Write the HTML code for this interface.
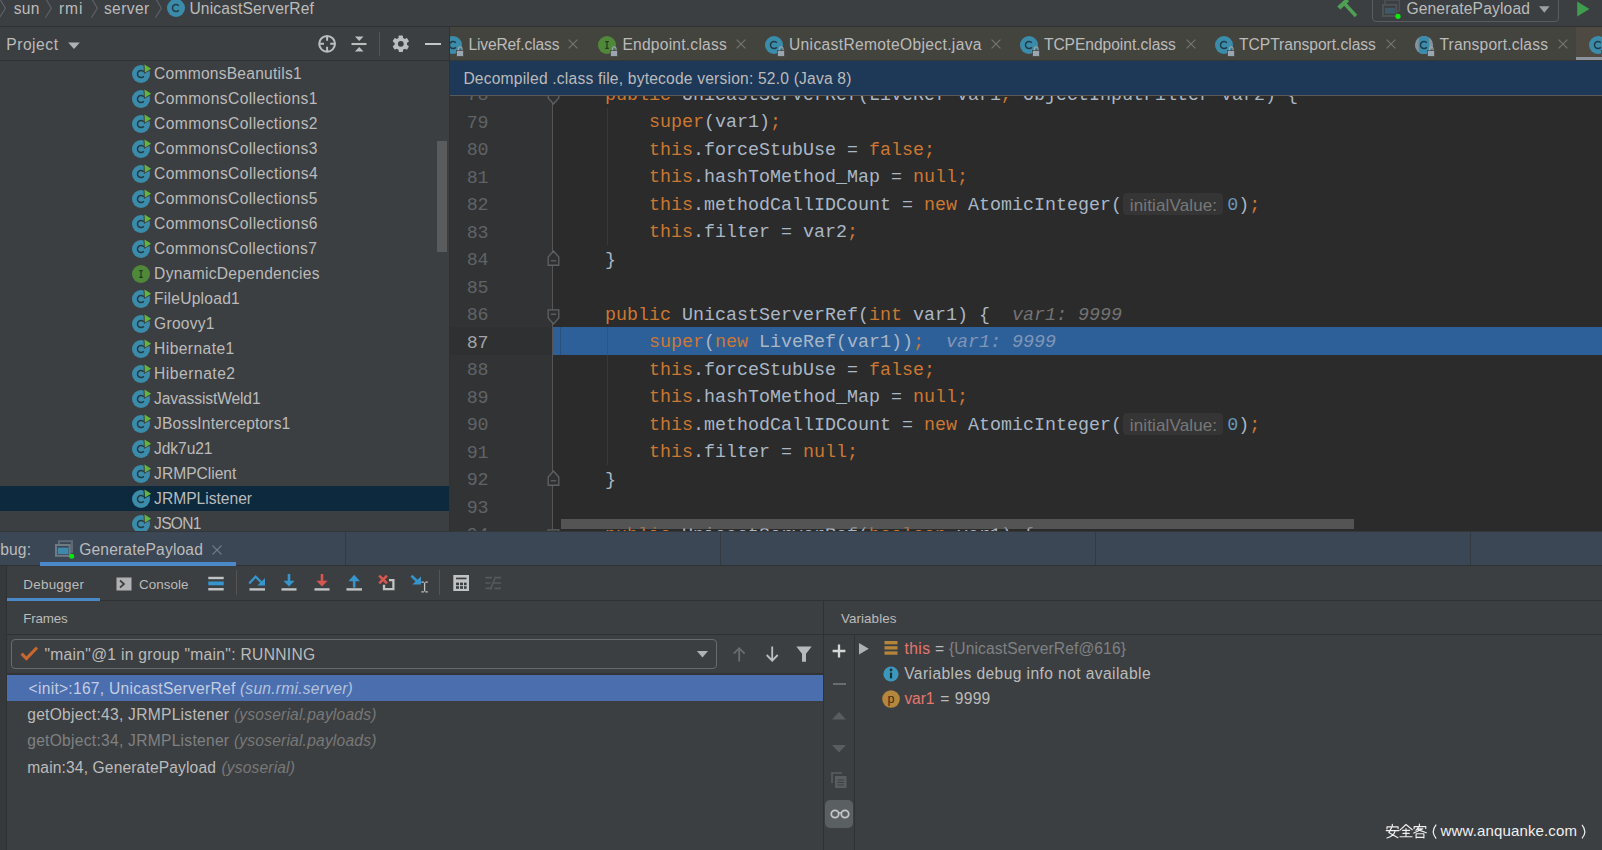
<!DOCTYPE html>
<html><head><meta charset="utf-8"><title>IDE</title>
<style>
html,body{margin:0;padding:0;}
body{width:1602px;height:850px;overflow:hidden;background:#3c3f41;position:relative;font-family:"Liberation Sans",sans-serif;color:#bbbbbb;}
.ab{position:absolute;}
.t{position:absolute;white-space:pre;font-size:16px;line-height:20px;color:#bbbbbb;}
.code{position:absolute;white-space:pre;font-family:"Liberation Mono",monospace;font-size:18.33px;line-height:27.5px;color:#a9b7c6;height:27.5px;}
.k{color:#cc7832;}
.n{color:#6897bb;}
.ln{position:absolute;white-space:pre;font-family:"Liberation Mono",monospace;font-size:18.33px;line-height:27.5px;color:#606366;left:450px;width:38px;text-align:right;height:27.5px;letter-spacing:-0.4px;}
.hint{display:inline-block;vertical-align:top;font-family:"Liberation Sans",sans-serif;font-size:17px;letter-spacing:0.13px;color:#787878;background:#353535;border-radius:4px;height:22px;line-height:25px;margin:1px 3.7px 0 1.5px;width:100px;text-align:center;}
.dv{color:#727272;font-style:italic;}
</style></head><body>

<div class="ab" style="left:0;top:26px;width:1602px;height:1px;background:#2f3133"></div>
<svg class="ab" style="left:-0.8px;top:0" width="10" height="20" viewBox="0 0 10 20"><path d="M0.6 -1.5 L6.4 8.2 L0.3 17.8" fill="none" stroke="#5e6468" stroke-width="1.1"/></svg>
<svg class="ab" style="left:44.6px;top:0" width="10" height="20" viewBox="0 0 10 20"><path d="M0.6 -1.5 L6.4 8.2 L0.3 17.8" fill="none" stroke="#5e6468" stroke-width="1.1"/></svg>
<svg class="ab" style="left:90.8px;top:0" width="10" height="20" viewBox="0 0 10 20"><path d="M0.6 -1.5 L6.4 8.2 L0.3 17.8" fill="none" stroke="#5e6468" stroke-width="1.1"/></svg>
<svg class="ab" style="left:154.8px;top:0" width="10" height="20" viewBox="0 0 10 20"><path d="M0.6 -1.5 L6.4 8.2 L0.3 17.8" fill="none" stroke="#5e6468" stroke-width="1.1"/></svg>
<div class="t" style="left:13.70px;top:-1.06px;font-size:15.6px;letter-spacing:0.249px;">sun</div>
<div class="t" style="left:58.90px;top:-1.06px;font-size:15.6px;letter-spacing:1.015px;">rmi</div>
<div class="t" style="left:103.90px;top:-1.06px;font-size:15.6px;letter-spacing:0.393px;">server</div>
<svg class="ab" style="left:166px;top:-1.6999999999999993px;overflow:visible" width="20" height="20" viewBox="0 0 20 20"><circle cx="10" cy="10" r="9" fill="#3b8cab"/><path d="M12.8 7.8 A3.55 3.55 0 1 0 12.8 12.2" fill="none" stroke="#223a45" stroke-width="1.45"/></svg>
<div class="t" style="left:189.40px;top:-1.06px;font-size:15.6px;letter-spacing:0.154px;">UnicastServerRef</div>
<svg class="ab" style="left:1334px;top:-3px" width="26" height="24" viewBox="0 0 26 24"><path d="M3.2 9.6 L12.2 1.2 L15.2 4.2 L6.4 12.6 Z" fill="#4f9f55"/><path d="M10.5 6.5 L22 19" stroke="#4f9f55" stroke-width="3.4"/></svg>
<div class="ab" style="left:1372px;top:-6px;width:187px;height:28px;border:1px solid #5a5d5f;border-radius:4px;box-sizing:border-box"></div>
<svg class="ab" style="left:1378px;top:-2px" width="26" height="24" viewBox="0 0 26 24"><rect x="7" y="2" width="14.3" height="11" fill="none" stroke="#4d5154" stroke-width="1.6"/><rect x="4.9" y="6.8" width="13.4" height="11.2" fill="#3c3f41" stroke="#4e5356" stroke-width="1.9"/><rect x="6.9" y="9.9" width="10" height="5.9" fill="#3f5a66"/><circle cx="20" cy="18.3" r="2.6" fill="#08ee08"/></svg>
<div class="t" style="left:1406.40px;top:-1.06px;font-size:15.6px;letter-spacing:0.152px;">GeneratePayload</div>
<svg class="ab" style="left:1538px;top:6px" width="12" height="8" viewBox="0 0 12 8"><path d="M1 0.2 H11.6 L6.3 6.8 Z" fill="#9da0a4"/></svg>
<svg class="ab" style="left:1576px;top:0px" width="16" height="18" viewBox="0 0 16 18"><path d="M1.2 1.6 L13.4 9 L1.2 16.4 Z" fill="#3f9e4d"/></svg>
<div class="ab" style="left:0;top:60px;width:450px;height:1px;background:#2f3133"></div>
<div class="ab" style="left:449px;top:27px;width:1px;height:504px;background:#2f3133"></div>
<div class="t" style="left:6.20px;top:34.94px;font-size:15.6px;letter-spacing:0.550px;">Project</div>
<svg class="ab" style="left:67px;top:41.5px" width="14" height="8" viewBox="0 0 14 8"><path d="M1.2 0.5 H12.8 L7 7 Z" fill="#afb1b3"/></svg>
<svg class="ab" style="left:317px;top:34px" width="20" height="20" viewBox="0 0 20 20"><circle cx="10.1" cy="9.8" r="7.9" fill="none" stroke="#bbbdbf" stroke-width="2"/><path d="M10.1 2v4.8M10.1 12.8v4.8M2.2 9.8h4.8M13.2 9.8h4.8" stroke="#bbbdbf" stroke-width="2"/></svg>
<svg class="ab" style="left:349px;top:34px" width="20" height="20" viewBox="0 0 20 20"><path d="M2.5 10h15" stroke="#bbbdbf" stroke-width="2.1"/><path d="M5.9 2.4h8.6L10.2 7Z M5.9 17.6h8.6L10.2 13Z" fill="#bbbdbf"/></svg>
<div class="ab" style="left:379px;top:32px;width:1px;height:24px;background:#555453"></div>
<svg class="ab" style="left:391px;top:34px" width="20" height="20" viewBox="0 0 20 20"><g fill="#bbbdbf" transform="translate(-0.2,-0.2)"><circle cx="10" cy="10" r="6.3"/><rect x="7.8" y="1.7" width="4.4" height="16.6" rx="0.8"/><rect x="7.8" y="1.7" width="4.4" height="16.6" rx="0.8" transform="rotate(60 10 10)"/><rect x="7.8" y="1.7" width="4.4" height="16.6" rx="0.8" transform="rotate(120 10 10)"/></g><circle cx="9.8" cy="9.8" r="2.9" fill="#3c3f41"/></svg>
<div class="ab" style="left:425.4px;top:42.8px;width:15.4px;height:2.3px;background:#c4c6c8"></div>
<div class="ab" style="left:0;top:61px;width:449px;height:470px;overflow:hidden"><div class="ab" style="left:0;top:-61px;width:449px;height:600px">
<svg class="ab" style="left:131px;top:63.8px;overflow:visible" width="20" height="20" viewBox="0 0 20 20"><circle cx="10" cy="10" r="9" fill="#3b8cab"/><path d="M12.8 7.8 A3.55 3.55 0 1 0 12.8 12.2" fill="none" stroke="#223a45" stroke-width="1.45"/><path d="M12.5 -1.2 L21.8 4.7 L12.9 10 Z" fill="#3c3f41"/><path d="M13.5 0.4 L20.2 4.7 L13.9 8.5 Z" fill="#62b543"/></svg>
<div class="t" style="left:154.10px;top:63.94px;font-size:15.6px;letter-spacing:0.227px;">CommonsBeanutils1</div>
<svg class="ab" style="left:131px;top:88.8px;overflow:visible" width="20" height="20" viewBox="0 0 20 20"><circle cx="10" cy="10" r="9" fill="#3b8cab"/><path d="M12.8 7.8 A3.55 3.55 0 1 0 12.8 12.2" fill="none" stroke="#223a45" stroke-width="1.45"/><path d="M12.5 -1.2 L21.8 4.7 L12.9 10 Z" fill="#3c3f41"/><path d="M13.5 0.4 L20.2 4.7 L13.9 8.5 Z" fill="#62b543"/></svg>
<div class="t" style="left:154.10px;top:88.94px;font-size:15.6px;letter-spacing:0.402px;">CommonsCollections1</div>
<svg class="ab" style="left:131px;top:113.8px;overflow:visible" width="20" height="20" viewBox="0 0 20 20"><circle cx="10" cy="10" r="9" fill="#3b8cab"/><path d="M12.8 7.8 A3.55 3.55 0 1 0 12.8 12.2" fill="none" stroke="#223a45" stroke-width="1.45"/><path d="M12.5 -1.2 L21.8 4.7 L12.9 10 Z" fill="#3c3f41"/><path d="M13.5 0.4 L20.2 4.7 L13.9 8.5 Z" fill="#62b543"/></svg>
<div class="t" style="left:154.10px;top:113.94px;font-size:15.6px;letter-spacing:0.413px;">CommonsCollections2</div>
<svg class="ab" style="left:131px;top:138.8px;overflow:visible" width="20" height="20" viewBox="0 0 20 20"><circle cx="10" cy="10" r="9" fill="#3b8cab"/><path d="M12.8 7.8 A3.55 3.55 0 1 0 12.8 12.2" fill="none" stroke="#223a45" stroke-width="1.45"/><path d="M12.5 -1.2 L21.8 4.7 L12.9 10 Z" fill="#3c3f41"/><path d="M13.5 0.4 L20.2 4.7 L13.9 8.5 Z" fill="#62b543"/></svg>
<div class="t" style="left:154.10px;top:138.94px;font-size:15.6px;letter-spacing:0.402px;">CommonsCollections3</div>
<svg class="ab" style="left:131px;top:163.8px;overflow:visible" width="20" height="20" viewBox="0 0 20 20"><circle cx="10" cy="10" r="9" fill="#3b8cab"/><path d="M12.8 7.8 A3.55 3.55 0 1 0 12.8 12.2" fill="none" stroke="#223a45" stroke-width="1.45"/><path d="M12.5 -1.2 L21.8 4.7 L12.9 10 Z" fill="#3c3f41"/><path d="M13.5 0.4 L20.2 4.7 L13.9 8.5 Z" fill="#62b543"/></svg>
<div class="t" style="left:154.10px;top:163.94px;font-size:15.6px;letter-spacing:0.423px;">CommonsCollections4</div>
<svg class="ab" style="left:131px;top:188.8px;overflow:visible" width="20" height="20" viewBox="0 0 20 20"><circle cx="10" cy="10" r="9" fill="#3b8cab"/><path d="M12.8 7.8 A3.55 3.55 0 1 0 12.8 12.2" fill="none" stroke="#223a45" stroke-width="1.45"/><path d="M12.5 -1.2 L21.8 4.7 L12.9 10 Z" fill="#3c3f41"/><path d="M13.5 0.4 L20.2 4.7 L13.9 8.5 Z" fill="#62b543"/></svg>
<div class="t" style="left:154.10px;top:188.94px;font-size:15.6px;letter-spacing:0.402px;">CommonsCollections5</div>
<svg class="ab" style="left:131px;top:213.8px;overflow:visible" width="20" height="20" viewBox="0 0 20 20"><circle cx="10" cy="10" r="9" fill="#3b8cab"/><path d="M12.8 7.8 A3.55 3.55 0 1 0 12.8 12.2" fill="none" stroke="#223a45" stroke-width="1.45"/><path d="M12.5 -1.2 L21.8 4.7 L12.9 10 Z" fill="#3c3f41"/><path d="M13.5 0.4 L20.2 4.7 L13.9 8.5 Z" fill="#62b543"/></svg>
<div class="t" style="left:154.10px;top:213.94px;font-size:15.6px;letter-spacing:0.413px;">CommonsCollections6</div>
<svg class="ab" style="left:131px;top:238.8px;overflow:visible" width="20" height="20" viewBox="0 0 20 20"><circle cx="10" cy="10" r="9" fill="#3b8cab"/><path d="M12.8 7.8 A3.55 3.55 0 1 0 12.8 12.2" fill="none" stroke="#223a45" stroke-width="1.45"/><path d="M12.5 -1.2 L21.8 4.7 L12.9 10 Z" fill="#3c3f41"/><path d="M13.5 0.4 L20.2 4.7 L13.9 8.5 Z" fill="#62b543"/></svg>
<div class="t" style="left:154.10px;top:238.94px;font-size:15.6px;letter-spacing:0.381px;">CommonsCollections7</div>
<svg class="ab" style="left:131px;top:263.8px;overflow:visible" width="20" height="20" viewBox="0 0 20 20"><circle cx="10" cy="10" r="9" fill="#50883a"/><path d="M8.2 6.7h3.6M8.2 13.3h3.6M10 6.7v6.6" fill="none" stroke="#1f3a1c" stroke-width="1.2"/></svg>
<div class="t" style="left:154.10px;top:263.94px;font-size:15.6px;letter-spacing:0.288px;">DynamicDependencies</div>
<svg class="ab" style="left:131px;top:288.8px;overflow:visible" width="20" height="20" viewBox="0 0 20 20"><circle cx="10" cy="10" r="9" fill="#3b8cab"/><path d="M12.8 7.8 A3.55 3.55 0 1 0 12.8 12.2" fill="none" stroke="#223a45" stroke-width="1.45"/><path d="M12.5 -1.2 L21.8 4.7 L12.9 10 Z" fill="#3c3f41"/><path d="M13.5 0.4 L20.2 4.7 L13.9 8.5 Z" fill="#62b543"/></svg>
<div class="t" style="left:154.10px;top:288.94px;font-size:15.6px;letter-spacing:0.241px;">FileUpload1</div>
<svg class="ab" style="left:131px;top:313.8px;overflow:visible" width="20" height="20" viewBox="0 0 20 20"><circle cx="10" cy="10" r="9" fill="#3b8cab"/><path d="M12.8 7.8 A3.55 3.55 0 1 0 12.8 12.2" fill="none" stroke="#223a45" stroke-width="1.45"/><path d="M12.5 -1.2 L21.8 4.7 L12.9 10 Z" fill="#3c3f41"/><path d="M13.5 0.4 L20.2 4.7 L13.9 8.5 Z" fill="#62b543"/></svg>
<div class="t" style="left:154.10px;top:313.94px;font-size:15.6px;letter-spacing:0.235px;">Groovy1</div>
<svg class="ab" style="left:131px;top:338.8px;overflow:visible" width="20" height="20" viewBox="0 0 20 20"><circle cx="10" cy="10" r="9" fill="#3b8cab"/><path d="M12.8 7.8 A3.55 3.55 0 1 0 12.8 12.2" fill="none" stroke="#223a45" stroke-width="1.45"/><path d="M12.5 -1.2 L21.8 4.7 L12.9 10 Z" fill="#3c3f41"/><path d="M13.5 0.4 L20.2 4.7 L13.9 8.5 Z" fill="#62b543"/></svg>
<div class="t" style="left:154.10px;top:338.94px;font-size:15.6px;letter-spacing:0.418px;">Hibernate1</div>
<svg class="ab" style="left:131px;top:363.8px;overflow:visible" width="20" height="20" viewBox="0 0 20 20"><circle cx="10" cy="10" r="9" fill="#3b8cab"/><path d="M12.8 7.8 A3.55 3.55 0 1 0 12.8 12.2" fill="none" stroke="#223a45" stroke-width="1.45"/><path d="M12.5 -1.2 L21.8 4.7 L12.9 10 Z" fill="#3c3f41"/><path d="M13.5 0.4 L20.2 4.7 L13.9 8.5 Z" fill="#62b543"/></svg>
<div class="t" style="left:154.10px;top:363.94px;font-size:15.6px;letter-spacing:0.518px;">Hibernate2</div>
<svg class="ab" style="left:131px;top:388.8px;overflow:visible" width="20" height="20" viewBox="0 0 20 20"><circle cx="10" cy="10" r="9" fill="#3b8cab"/><path d="M12.8 7.8 A3.55 3.55 0 1 0 12.8 12.2" fill="none" stroke="#223a45" stroke-width="1.45"/><path d="M12.5 -1.2 L21.8 4.7 L12.9 10 Z" fill="#3c3f41"/><path d="M13.5 0.4 L20.2 4.7 L13.9 8.5 Z" fill="#62b543"/></svg>
<div class="t" style="left:154.10px;top:388.94px;font-size:15.6px;letter-spacing:-0.121px;">JavassistWeld1</div>
<svg class="ab" style="left:131px;top:413.8px;overflow:visible" width="20" height="20" viewBox="0 0 20 20"><circle cx="10" cy="10" r="9" fill="#3b8cab"/><path d="M12.8 7.8 A3.55 3.55 0 1 0 12.8 12.2" fill="none" stroke="#223a45" stroke-width="1.45"/><path d="M12.5 -1.2 L21.8 4.7 L12.9 10 Z" fill="#3c3f41"/><path d="M13.5 0.4 L20.2 4.7 L13.9 8.5 Z" fill="#62b543"/></svg>
<div class="t" style="left:154.10px;top:413.94px;font-size:15.6px;letter-spacing:0.159px;">JBossInterceptors1</div>
<svg class="ab" style="left:131px;top:438.8px;overflow:visible" width="20" height="20" viewBox="0 0 20 20"><circle cx="10" cy="10" r="9" fill="#3b8cab"/><path d="M12.8 7.8 A3.55 3.55 0 1 0 12.8 12.2" fill="none" stroke="#223a45" stroke-width="1.45"/><path d="M12.5 -1.2 L21.8 4.7 L12.9 10 Z" fill="#3c3f41"/><path d="M13.5 0.4 L20.2 4.7 L13.9 8.5 Z" fill="#62b543"/></svg>
<div class="t" style="left:154.10px;top:438.94px;font-size:15.6px;letter-spacing:-0.097px;">Jdk7u21</div>
<svg class="ab" style="left:131px;top:463.8px;overflow:visible" width="20" height="20" viewBox="0 0 20 20"><circle cx="10" cy="10" r="9" fill="#3b8cab"/><path d="M12.8 7.8 A3.55 3.55 0 1 0 12.8 12.2" fill="none" stroke="#223a45" stroke-width="1.45"/><path d="M12.5 -1.2 L21.8 4.7 L12.9 10 Z" fill="#3c3f41"/><path d="M13.5 0.4 L20.2 4.7 L13.9 8.5 Z" fill="#62b543"/></svg>
<div class="t" style="left:154.10px;top:463.94px;font-size:15.6px;letter-spacing:-0.005px;">JRMPClient</div>
<div class="ab" style="left:0;top:486px;width:450px;height:25px;background:#0d293e"></div>
<svg class="ab" style="left:131px;top:488.8px;overflow:visible" width="20" height="20" viewBox="0 0 20 20"><circle cx="10" cy="10" r="9" fill="#3b8cab"/><path d="M12.8 7.8 A3.55 3.55 0 1 0 12.8 12.2" fill="none" stroke="#223a45" stroke-width="1.45"/><path d="M12.5 -1.2 L21.8 4.7 L12.9 10 Z" fill="#0d293e"/><path d="M13.5 0.4 L20.2 4.7 L13.9 8.5 Z" fill="#62b543"/></svg>
<div class="t" style="left:154.10px;top:488.94px;font-size:15.6px;letter-spacing:0.003px;">JRMPListener</div>
<svg class="ab" style="left:131px;top:513.8px;overflow:visible" width="20" height="20" viewBox="0 0 20 20"><circle cx="10" cy="10" r="9" fill="#3b8cab"/><path d="M12.8 7.8 A3.55 3.55 0 1 0 12.8 12.2" fill="none" stroke="#223a45" stroke-width="1.45"/><path d="M12.5 -1.2 L21.8 4.7 L12.9 10 Z" fill="#3c3f41"/><path d="M13.5 0.4 L20.2 4.7 L13.9 8.5 Z" fill="#62b543"/></svg>
<div class="t" style="left:154.10px;top:513.94px;font-size:15.6px;letter-spacing:-0.756px;">JSON1</div>
<div class="ab" style="left:437px;top:141px;width:10.3px;height:111px;background:#595b5d"></div>
</div></div>
<div class="ab" style="left:450px;top:27px;width:1152px;height:33px;background:#44443f"></div>
<div class="ab" style="left:1576px;top:27px;width:26px;height:33px;background:#4e4a42"></div>
<div class="ab" style="left:450px;top:27px;width:1152px;height:33px;overflow:hidden"><div class="ab" style="left:-450px;top:-27px;width:1602px;height:100px">
<svg class="ab" style="left:443px;top:35px;overflow:visible" width="20" height="20" viewBox="0 0 20 20"><circle cx="10" cy="10" r="9" fill="#3b8cab"/><path d="M12.8 7.8 A3.55 3.55 0 1 0 12.8 12.2" fill="none" stroke="#223a45" stroke-width="1.45"/><path d="M15.4 16v-2.3a1.8 1.8 0 0 1 3.6 0v2.3" fill="none" stroke="#9aa7b0" stroke-width="1.2"/><rect x="13.6" y="15.6" width="7" height="5.8" fill="#9aa7b0" stroke="#45443f" stroke-width="0.7"/></svg>
<div class="t" style="left:468.40px;top:34.94px;font-size:15.6px;letter-spacing:-0.136px;">LiveRef.class</div>
<svg class="ab" style="left:568px;top:38.8px" width="10" height="10" viewBox="0 0 10 10"><path d="M0.6 0.6L9.4 9.4M9.4 0.6L0.6 9.4" stroke="#77766f" stroke-width="1.1"/></svg>
<svg class="ab" style="left:597px;top:35px;overflow:visible" width="20" height="20" viewBox="0 0 20 20"><circle cx="10" cy="10" r="9" fill="#50883a"/><path d="M8.2 6.7h3.6M8.2 13.3h3.6M10 6.7v6.6" fill="none" stroke="#1f3a1c" stroke-width="1.2"/><path d="M15.4 16v-2.3a1.8 1.8 0 0 1 3.6 0v2.3" fill="none" stroke="#9aa7b0" stroke-width="1.2"/><rect x="13.6" y="15.6" width="7" height="5.8" fill="#9aa7b0" stroke="#45443f" stroke-width="0.7"/></svg>
<div class="t" style="left:622.40px;top:34.94px;font-size:15.6px;letter-spacing:0.231px;">Endpoint.class</div>
<svg class="ab" style="left:736px;top:38.8px" width="10" height="10" viewBox="0 0 10 10"><path d="M0.6 0.6L9.4 9.4M9.4 0.6L0.6 9.4" stroke="#77766f" stroke-width="1.1"/></svg>
<svg class="ab" style="left:764.3px;top:35px;overflow:visible" width="20" height="20" viewBox="0 0 20 20"><circle cx="10" cy="10" r="9" fill="#3b8cab"/><path d="M12.8 7.8 A3.55 3.55 0 1 0 12.8 12.2" fill="none" stroke="#223a45" stroke-width="1.45"/><path d="M15.4 16v-2.3a1.8 1.8 0 0 1 3.6 0v2.3" fill="none" stroke="#9aa7b0" stroke-width="1.2"/><rect x="13.6" y="15.6" width="7" height="5.8" fill="#9aa7b0" stroke="#45443f" stroke-width="0.7"/></svg>
<div class="t" style="left:789.00px;top:34.94px;font-size:15.6px;letter-spacing:0.343px;">UnicastRemoteObject.java</div>
<svg class="ab" style="left:991.3px;top:38.8px" width="10" height="10" viewBox="0 0 10 10"><path d="M0.6 0.6L9.4 9.4M9.4 0.6L0.6 9.4" stroke="#77766f" stroke-width="1.1"/></svg>
<svg class="ab" style="left:1019.3px;top:35px;overflow:visible" width="20" height="20" viewBox="0 0 20 20"><circle cx="10" cy="10" r="9" fill="#3b8cab"/><path d="M12.8 7.8 A3.55 3.55 0 1 0 12.8 12.2" fill="none" stroke="#223a45" stroke-width="1.45"/><path d="M15.4 16v-2.3a1.8 1.8 0 0 1 3.6 0v2.3" fill="none" stroke="#9aa7b0" stroke-width="1.2"/><rect x="13.6" y="15.6" width="7" height="5.8" fill="#9aa7b0" stroke="#45443f" stroke-width="0.7"/></svg>
<div class="t" style="left:1043.90px;top:34.94px;font-size:15.6px;letter-spacing:-0.039px;">TCPEndpoint.class</div>
<svg class="ab" style="left:1186px;top:38.8px" width="10" height="10" viewBox="0 0 10 10"><path d="M0.6 0.6L9.4 9.4M9.4 0.6L0.6 9.4" stroke="#77766f" stroke-width="1.1"/></svg>
<svg class="ab" style="left:1214.3px;top:35px;overflow:visible" width="20" height="20" viewBox="0 0 20 20"><circle cx="10" cy="10" r="9" fill="#3b8cab"/><path d="M12.8 7.8 A3.55 3.55 0 1 0 12.8 12.2" fill="none" stroke="#223a45" stroke-width="1.45"/><path d="M15.4 16v-2.3a1.8 1.8 0 0 1 3.6 0v2.3" fill="none" stroke="#9aa7b0" stroke-width="1.2"/><rect x="13.6" y="15.6" width="7" height="5.8" fill="#9aa7b0" stroke="#45443f" stroke-width="0.7"/></svg>
<div class="t" style="left:1239.00px;top:34.94px;font-size:15.6px;letter-spacing:-0.020px;">TCPTransport.class</div>
<svg class="ab" style="left:1386.4px;top:38.8px" width="10" height="10" viewBox="0 0 10 10"><path d="M0.6 0.6L9.4 9.4M9.4 0.6L0.6 9.4" stroke="#77766f" stroke-width="1.1"/></svg>
<svg class="ab" style="left:1414px;top:35px;overflow:visible" width="20" height="20" viewBox="0 0 20 20"><clipPath id="cpa"><circle cx="10" cy="10" r="9.1"/></clipPath><circle cx="10" cy="10" r="9.1" fill="#87939b"/><rect x="4.7" y="0" width="10.5" height="20" fill="#3b8cab" clip-path="url(#cpa)"/><path d="M12.8 7.8 A3.55 3.55 0 1 0 12.8 12.2" fill="none" stroke="#223a45" stroke-width="1.45"/><path d="M15.4 16v-2.3a1.8 1.8 0 0 1 3.6 0v2.3" fill="none" stroke="#9aa7b0" stroke-width="1.2"/><rect x="13.6" y="15.6" width="7" height="5.8" fill="#9aa7b0" stroke="#45443f" stroke-width="0.7"/></svg>
<div class="t" style="left:1439.40px;top:34.94px;font-size:15.6px;letter-spacing:0.183px;">Transport.class</div>
<svg class="ab" style="left:1558px;top:38.8px" width="10" height="10" viewBox="0 0 10 10"><path d="M0.6 0.6L9.4 9.4M9.4 0.6L0.6 9.4" stroke="#77766f" stroke-width="1.1"/></svg>
<svg class="ab" style="left:1587.7px;top:35px;overflow:visible" width="20" height="20" viewBox="0 0 20 20"><circle cx="10" cy="10" r="9" fill="#3b8cab"/><path d="M12.8 7.8 A3.55 3.55 0 1 0 12.8 12.2" fill="none" stroke="#223a45" stroke-width="1.45"/><path d="M15.4 16v-2.3a1.8 1.8 0 0 1 3.6 0v2.3" fill="none" stroke="#9aa7b0" stroke-width="1.2"/><rect x="13.6" y="15.6" width="7" height="5.8" fill="#9aa7b0" stroke="#45443f" stroke-width="0.7"/></svg>
<div class="ab" style="left:1576px;top:57px;width:26px;height:3.4px;background:#8b939d"></div>
</div></div>
<div class="ab" style="left:450px;top:60px;width:1152px;height:1px;background:#33373a"></div>
<div class="ab" style="left:450px;top:61px;width:1152px;height:34px;background:#1e3857"></div>
<div class="ab" style="left:450px;top:95px;width:1152px;height:1px;background:#595957"></div>
<div class="t" style="left:463.40px;top:68.94px;font-size:15.6px;letter-spacing:0.204px;">Decompiled .class file, bytecode version: 52.0 (Java 8)</div>
<div class="ab" style="left:450px;top:96px;width:1152px;height:435px;background:#2b2b2b;overflow:hidden"><div class="ab" style="left:-450px;top:-96px;width:1602px;height:600px">
<div class="ab" style="left:450px;top:96px;width:102px;height:435px;background:#313335"></div>
<div class="ab" style="left:450px;top:327px;width:102px;height:28px;background:#2f3032"></div>
<div class="ab" style="left:552px;top:96px;width:1px;height:435px;background:#555555"></div>
<div class="ab" style="left:607px;top:108px;width:1px;height:137px;background:#393939"></div>
<div class="ab" style="left:607px;top:328px;width:1px;height:137px;background:#393939"></div>
<div class="ab" style="left:553px;top:327px;width:1049px;height:28px;background:#2d6099"></div>
<div class="ab" style="left:560px;top:327px;width:1px;height:28px;background:#29507f"></div>
<div class="ab" style="left:607px;top:327px;width:1px;height:28px;background:#2a5486"></div>
<div class="ln" style="top:82.30px;color:#606366">78</div>
<div class="code" style="left:561px;top:81.80px">    <span class="k">public</span> UnicastServerRef(LiveRef var1<span class="k">,</span> ObjectInputFilter var2) {</div>
<div class="ln" style="top:109.80px;color:#606366">79</div>
<div class="code" style="left:561px;top:109.30px">        <span class="k">super</span>(var1)<span class="k">;</span></div>
<div class="ln" style="top:137.30px;color:#606366">80</div>
<div class="code" style="left:561px;top:136.80px">        <span class="k">this</span>.forceStubUse = <span class="k">false;</span></div>
<div class="ln" style="top:164.80px;color:#606366">81</div>
<div class="code" style="left:561px;top:164.30px">        <span class="k">this</span>.hashToMethod_Map = <span class="k">null;</span></div>
<div class="ln" style="top:192.30px;color:#606366">82</div>
<div class="code" style="left:561px;top:191.80px">        <span class="k">this</span>.methodCallIDCount = <span class="k">new</span> AtomicInteger(<span class="hint">initialValue:</span><span class="n">0</span>)<span class="k">;</span></div>
<div class="ln" style="top:219.80px;color:#606366">83</div>
<div class="code" style="left:561px;top:219.30px">        <span class="k">this</span>.filter = var2<span class="k">;</span></div>
<div class="ln" style="top:247.30px;color:#606366">84</div>
<div class="code" style="left:561px;top:246.80px">    }</div>
<div class="ln" style="top:274.80px;color:#606366">85</div>
<div class="ln" style="top:302.30px;color:#606366">86</div>
<div class="code" style="left:561px;top:301.80px">    <span class="k">public</span> UnicastServerRef(<span class="k">int</span> var1) {  <span class="dv">var1: 9999</span></div>
<div class="ln" style="top:329.80px;color:#a4a3a3">87</div>
<div class="code" style="left:561px;top:329.30px">        <span class="k">super</span>(<span class="k">new</span> LiveRef(var1))<span class="k">;</span>  <span class="dv" style="color:#7f96b8">var1: 9999</span></div>
<div class="ln" style="top:357.30px;color:#606366">88</div>
<div class="code" style="left:561px;top:356.80px">        <span class="k">this</span>.forceStubUse = <span class="k">false;</span></div>
<div class="ln" style="top:384.80px;color:#606366">89</div>
<div class="code" style="left:561px;top:384.30px">        <span class="k">this</span>.hashToMethod_Map = <span class="k">null;</span></div>
<div class="ln" style="top:412.30px;color:#606366">90</div>
<div class="code" style="left:561px;top:411.80px">        <span class="k">this</span>.methodCallIDCount = <span class="k">new</span> AtomicInteger(<span class="hint">initialValue:</span><span class="n">0</span>)<span class="k">;</span></div>
<div class="ln" style="top:439.80px;color:#606366">91</div>
<div class="code" style="left:561px;top:439.30px">        <span class="k">this</span>.filter = <span class="k">null;</span></div>
<div class="ln" style="top:467.30px;color:#606366">92</div>
<div class="code" style="left:561px;top:466.80px">    }</div>
<div class="ln" style="top:494.80px;color:#606366">93</div>
<div class="ln" style="top:522.30px;color:#606366">94</div>
<div class="code" style="left:561px;top:521.80px">    <span class="k">public</span> UnicastServerRef(<span class="k">boolean</span> var1) {</div>
<svg class="ab" style="left:546.5px;top:89px" width="13" height="16" viewBox="0 0 13 16"><path d="M1.2 0.8h10.6v8.2l-5.3 6l-5.3-6z" fill="#2f3032" stroke="#5e6163" stroke-width="1.35"/><path d="M3.8 5.2h5.4" stroke="#5e6163" stroke-width="1.35"/></svg>
<svg class="ab" style="left:546.5px;top:250px" width="13" height="16" viewBox="0 0 13 16"><path d="M1.2 15.2h10.6v-8.2l-5.3-6l-5.3 6z" fill="#2f3032" stroke="#5e6163" stroke-width="1.35"/><path d="M3.8 10.8h5.4" stroke="#5e6163" stroke-width="1.35"/></svg>
<svg class="ab" style="left:546.5px;top:309px" width="13" height="16" viewBox="0 0 13 16"><path d="M1.2 0.8h10.6v8.2l-5.3 6l-5.3-6z" fill="#2f3032" stroke="#5e6163" stroke-width="1.35"/><path d="M3.8 5.2h5.4" stroke="#5e6163" stroke-width="1.35"/></svg>
<svg class="ab" style="left:546.5px;top:470px" width="13" height="16" viewBox="0 0 13 16"><path d="M1.2 15.2h10.6v-8.2l-5.3-6l-5.3 6z" fill="#2f3032" stroke="#5e6163" stroke-width="1.35"/><path d="M3.8 10.8h5.4" stroke="#5e6163" stroke-width="1.35"/></svg>
<svg class="ab" style="left:546.5px;top:529px" width="13" height="16" viewBox="0 0 13 16"><path d="M1.2 0.8h10.6v8.2l-5.3 6l-5.3-6z" fill="#2f3032" stroke="#5e6163" stroke-width="1.35"/><path d="M3.8 5.2h5.4" stroke="#5e6163" stroke-width="1.35"/></svg>
<div class="ab" style="left:561px;top:519px;width:793px;height:10px;background:rgba(110,110,110,0.62)"></div>
</div></div>
<div class="ab" style="left:0;top:531px;width:1602px;height:34px;background:#3b4754"></div>
<div class="ab" style="left:0;top:565px;width:1602px;height:1px;background:#2f3133"></div>
<div class="t" style="left:-20.10px;top:539.94px;font-size:15.6px;letter-spacing:0.166px;">Debug:</div>
<svg class="ab" style="left:52px;top:539px" width="26" height="24" viewBox="0 0 26 24"><rect x="7" y="2.2" width="13" height="10.5" fill="none" stroke="#5e6a74" stroke-width="2"/><rect x="4" y="6" width="13.7" height="10.8" fill="#3b4754" stroke="#6e7a84" stroke-width="2"/><rect x="5.7" y="8.6" width="10.7" height="6.5" fill="#3f8aab"/><circle cx="19.7" cy="17.2" r="2.5" fill="#08e808"/></svg>
<div class="t" style="left:79.20px;top:539.94px;font-size:15.6px;letter-spacing:0.165px;">GeneratePayload</div>
<svg class="ab" style="left:212px;top:545.3px" width="10" height="10" viewBox="0 0 10 10"><path d="M0.5 0.5L9.5 9.5M9.5 0.5L0.5 9.5" stroke="#6f7b86" stroke-width="1.1"/></svg>
<div class="ab" style="left:39.5px;top:562px;width:196.5px;height:4px;background:#4a88c7"></div>
<div class="ab" style="left:345px;top:532px;width:1px;height:33px;background:#343a42"></div>
<div class="ab" style="left:720px;top:532px;width:1px;height:33px;background:#343a42"></div>
<div class="ab" style="left:1095px;top:532px;width:1px;height:33px;background:#343a42"></div>
<div class="ab" style="left:1470px;top:532px;width:1px;height:33px;background:#343a42"></div>
<div class="ab" style="left:0;top:531px;width:1602px;height:1px;background:#33373b"></div>
<div class="ab" style="left:0;top:566px;width:6px;height:284px;background:#36393b"></div>
<div class="ab" style="left:6px;top:566px;width:1px;height:284px;background:#2f3133"></div>
<div class="ab" style="left:7px;top:600px;width:1595px;height:1px;background:#2f3133"></div>
<div class="t" style="left:23.20px;top:574.71px;font-size:13.4px;letter-spacing:0.293px;">Debugger</div>
<div class="ab" style="left:7px;top:598px;width:93px;height:3px;background:#4a88c7"></div>
<svg class="ab" style="left:116px;top:576.4px" width="16" height="16" viewBox="0 0 16 16"><rect x="0.5" y="1.5" width="15" height="13" fill="#afb1b3"/><path d="M4 4.5L8 8L4 11.5" fill="none" stroke="#3c3f41" stroke-width="1.7"/></svg>
<div class="t" style="left:139.00px;top:574.71px;font-size:13.4px;letter-spacing:0.062px;">Console</div>
<svg class="ab" style="left:207px;top:575px" width="18" height="18" viewBox="0 0 18 18"><rect x="1.3" y="1.8" width="15.4" height="2.4" fill="#c0c2c4"/><rect x="1.3" y="6.5" width="15.4" height="3.8" fill="#3695cc"/><rect x="1.3" y="13" width="15.4" height="2.5" fill="#c0c2c4"/></svg>
<div class="ab" style="left:236px;top:570px;width:1px;height:25px;background:#555453"></div>
<svg class="ab" style="left:247px;top:574px" width="20" height="20" viewBox="0 0 20 20"><path d="M2.2 9.6 L8.6 2.6 L15 9" fill="none" stroke="#3695cc" stroke-width="2.2"/><path d="M18 4v7.6H10.4z" fill="#3695cc"/><rect x="2.5" y="14.2" width="15.5" height="2.4" fill="#c0c2c4"/></svg>
<svg class="ab" style="left:279px;top:574px" width="20" height="20" viewBox="0 0 20 20"><path d="M10 0v8" stroke="#3695cc" stroke-width="2.6"/><path d="M4.4 6.8h11.2L10 12.4z" fill="#3695cc"/><rect x="2.5" y="14.2" width="15" height="2.4" fill="#c0c2c4"/></svg>
<svg class="ab" style="left:312px;top:574px" width="20" height="20" viewBox="0 0 20 20"><path d="M10 0v8" stroke="#d8564f" stroke-width="2.6"/><path d="M4.4 6.8h11.2L10 12.4z" fill="#d8564f"/><rect x="2.5" y="14.2" width="15" height="2.4" fill="#c0c2c4"/></svg>
<svg class="ab" style="left:344px;top:574px" width="20" height="20" viewBox="0 0 20 20"><path d="M10.2 5v8.6" stroke="#3695cc" stroke-width="2.6"/><path d="M4.4 7.2h11.6L10.2 0.8z" fill="#3695cc"/><rect x="2.5" y="14.2" width="15.5" height="2.4" fill="#c0c2c4"/></svg>
<svg class="ab" style="left:377px;top:574px" width="20" height="20" viewBox="0 0 20 20"><path d="M2.2 1.6L10 9.4M10 1.6L2.2 9.4" stroke="#d8564f" stroke-width="2.6"/><path d="M12 6.2h4.4v9h-9.4v-4.4" fill="none" stroke="#c0c2c4" stroke-width="2.3"/></svg>
<svg class="ab" style="left:409px;top:574px" width="22" height="20" viewBox="0 0 22 20"><path d="M2.4 1.8L8.5 7.4" stroke="#3695cc" stroke-width="2.7"/><path d="M12 2.4v8.2H3.4z" fill="#3695cc"/><path d="M12.4 8.2h2.4M16.4 8.2h2.4M12.4 17.8h2.4M16.4 17.8h2.4M15.6 8.6v8.8" stroke="#c0c2c4" stroke-width="1.3" fill="none"/></svg>
<div class="ab" style="left:439px;top:570px;width:1px;height:25px;background:#555453"></div>
<svg class="ab" style="left:451px;top:574px" width="20" height="20" viewBox="0 0 20 20"><rect x="2.3" y="1" width="15.7" height="16" fill="#c0c2c4"/><rect x="5" y="3.6" width="10.5" height="1.7" fill="#3c3f41"/><g fill="#3c3f41"><rect x="5" y="8.6" width="3" height="2.6"/><rect x="9" y="8.6" width="3" height="2.6"/><rect x="13" y="8.6" width="2.6" height="2.6"/><rect x="5" y="12.2" width="3" height="2.6"/><rect x="9" y="12.2" width="3" height="2.6"/><rect x="13" y="12.2" width="2.6" height="2.6"/></g></svg>
<svg class="ab" style="left:483px;top:574px" width="20" height="20" viewBox="0 0 20 20"><path d="M2.5 3.6h6.5M11.5 3.6h6.5M2.5 9h5M10 9h8M2.5 14.4h6.5M11.5 14.4h6.5M12.6 2.6L7.4 15.4" stroke="#56595b" stroke-width="1.6" fill="none"/></svg>
<div class="t" style="left:23.20px;top:608.71px;font-size:13.4px;letter-spacing:-0.169px;">Frames</div>
<div class="t" style="left:840.90px;top:608.71px;font-size:13.4px;letter-spacing:0.092px;">Variables</div>
<div class="ab" style="left:7px;top:634px;width:1595px;height:1px;background:#2f3133"></div>
<div class="ab" style="left:823px;top:601px;width:1px;height:249px;background:#2f3133"></div>
<div class="ab" style="left:854px;top:635px;width:1px;height:215px;background:#2f3133"></div>
<div class="ab" style="left:10.5px;top:639px;width:706px;height:30px;border:1px solid #6a6a6a;border-radius:4px;box-sizing:border-box;background:#3c3f41"></div>
<svg class="ab" style="left:19px;top:645px" width="22" height="18" viewBox="0 0 22 18"><path d="M2.6 8.6L7.4 13.6L18 2.6" fill="none" stroke="#cb6630" stroke-width="3"/></svg>
<div class="t" style="left:44.40px;top:644.94px;font-size:15.6px;letter-spacing:0.315px;">"main"@1 in group "main": RUNNING</div>
<svg class="ab" style="left:696px;top:651px" width="14" height="8" viewBox="0 0 14 8"><path d="M0.9 0.1 H12 L6.45 6.6 Z" fill="#b0b2b4"/></svg>
<svg class="ab" style="left:730px;top:644px" width="18" height="20" viewBox="0 0 18 20"><path d="M9.2 17.5V4M3.8 9.6L9.2 4.2L14.6 9.6" fill="none" stroke="#6a6d6f" stroke-width="1.8"/></svg>
<svg class="ab" style="left:763px;top:644px" width="18" height="20" viewBox="0 0 18 20"><path d="M9.2 2.6V16.5M3.7 11L9.2 16.6L14.7 11" fill="none" stroke="#bdbfc1" stroke-width="1.8"/></svg>
<svg class="ab" style="left:794px;top:645px" width="20" height="18" viewBox="0 0 20 18"><path d="M2.3 1.6h15.4L12 8.8v7.9h-4V8.8z" fill="#b7b9bb"/></svg>
<div class="ab" style="left:7px;top:673px;width:816px;height:2px;background:#313335"></div>
<div class="ab" style="left:7px;top:675px;width:816px;height:26px;background:#4b6eaf"></div>
<div class="t" style="left:28.60px;top:678.94px;font-size:15.6px;letter-spacing:0.270px;color:#c3cde2;">&lt;init&gt;:167, UnicastServerRef</div>
<div class="t" style="left:239.90px;top:678.94px;font-size:15.6px;letter-spacing:0.249px;color:#b4c2dc;font-style:italic;">(sun.rmi.server)</div>
<div class="t" style="left:27.20px;top:704.94px;font-size:15.6px;letter-spacing:0.273px;">getObject:43, JRMPListener</div>
<div class="t" style="left:233.90px;top:704.94px;font-size:15.6px;letter-spacing:0.199px;color:#787878;font-style:italic;">(ysoserial.payloads)</div>
<div class="t" style="left:27.20px;top:730.94px;font-size:15.6px;letter-spacing:0.273px;color:#7f8183;">getObject:34, JRMPListener</div>
<div class="t" style="left:233.90px;top:730.94px;font-size:15.6px;letter-spacing:0.199px;color:#787878;font-style:italic;">(ysoserial.payloads)</div>
<div class="t" style="left:27.20px;top:757.94px;font-size:15.6px;letter-spacing:0.138px;">main:34, GeneratePayload</div>
<div class="t" style="left:221.40px;top:757.94px;font-size:15.6px;letter-spacing:0.160px;color:#787878;font-style:italic;">(ysoserial)</div>
<svg class="ab" style="left:831px;top:643px" width="16" height="16" viewBox="0 0 16 16"><path d="M8 1.6v12.9M1.6 8h12.8" stroke="#d4d6d8" stroke-width="2.3"/></svg>
<div class="ab" style="left:833px;top:683px;width:12.5px;height:2px;background:#6a6d6f"></div>
<svg class="ab" style="left:831px;top:710.4px" width="16" height="12" viewBox="0 0 16 12"><path d="M1 9.6L8 2L15 9.6z" fill="#5a5d5f"/></svg>
<svg class="ab" style="left:831px;top:743px" width="16" height="12" viewBox="0 0 16 12"><path d="M1 2L8 9.5L15 2z" fill="#5a5d5f"/></svg>
<svg class="ab" style="left:830px;top:771px" width="18" height="18" viewBox="0 0 18 18"><path d="M2 12V2h10" fill="none" stroke="#5a5d5f" stroke-width="1.6"/><rect x="5" y="5" width="11.5" height="12" fill="#5a5d5f"/><path d="M7.5 9h6.5M7.5 11.5h6.5M7.5 14h6.5" stroke="#3c3f41" stroke-width="1"/></svg>
<div class="ab" style="left:825.3px;top:800px;width:27.7px;height:27.8px;background:#5a5f62;border-radius:5px"></div>
<svg class="ab" style="left:828px;top:806px" width="24" height="16" viewBox="0 0 24 16"><circle cx="7" cy="8" r="3.7" fill="none" stroke="#c3c5c7" stroke-width="1.8"/><circle cx="17" cy="8" r="3.7" fill="none" stroke="#c3c5c7" stroke-width="1.8"/><path d="M10.5 7.2q1.5-1 3 0" fill="none" stroke="#c3c5c7" stroke-width="1.6"/></svg>
<svg class="ab" style="left:858px;top:641.5px" width="12" height="14" viewBox="0 0 12 14"><path d="M1 1L10.8 6.8L1 12.6z" fill="#afb1b3"/></svg>
<svg class="ab" style="left:883px;top:640px" width="16" height="16" viewBox="0 0 16 16"><rect x="1.5" y="1" width="13" height="3.3" fill="#b5853c"/><rect x="1.5" y="6.2" width="13" height="3.3" fill="#b5853c"/><rect x="1.5" y="11.4" width="13" height="3.3" fill="#b5853c"/></svg>
<div class="t" style="left:904.40px;top:638.94px;font-size:15.6px;letter-spacing:0.481px;color:#e4776f;">this</div>
<div class="t" style="left:935.00px;top:638.94px;font-size:15.6px;letter-spacing:0.290px;">=</div>
<div class="t" style="left:949.00px;top:638.94px;font-size:15.6px;letter-spacing:0.117px;color:#7f8183;">{UnicastServerRef@616}</div>
<svg class="ab" style="left:882.2px;top:664.8px" width="18" height="18" viewBox="0 0 18 18"><circle cx="9" cy="9" r="7.6" fill="#3c98bb"/><rect x="7.9" y="7.6" width="2.2" height="5.8" fill="#1f2f38"/><circle cx="9" cy="5" r="1.4" fill="#1f2f38"/></svg>
<div class="t" style="left:904.20px;top:663.94px;font-size:15.6px;letter-spacing:0.408px;">Variables debug info not available</div>
<svg class="ab" style="left:881.2px;top:688.8px" width="20" height="20" viewBox="0 0 20 20"><circle cx="10" cy="10" r="8.8" fill="#b4873c"/><text x="10" y="13.6" font-family="Liberation Sans" font-size="12.5" text-anchor="middle" fill="#3a2c14">p</text></svg>
<div class="t" style="left:904.40px;top:688.94px;font-size:15.6px;letter-spacing:-0.087px;color:#e4776f;">var1</div>
<div class="t" style="left:940.20px;top:688.94px;font-size:15.6px;letter-spacing:0.090px;">=</div>
<div class="t" style="left:954.70px;top:688.94px;font-size:15.6px;letter-spacing:0.299px;">9999</div>
<svg class="ab" style="left:1386px;top:823.5px;overflow:visible" width="42" height="16" viewBox="0 0 42 16"><g fill="none" stroke="#f0f0f0" stroke-width="1.15" stroke-linecap="round" stroke-linejoin="round"><path d="M6.3 0.3V2M1 5V2.8H12.1V4.6M0.2 6.6H12.8M5.6 3.6L2.8 8.6L11.9 13.7M9.2 6.8C8.4 10 5.6 12.6 1 14"/><g transform="translate(13.6,0)"><path d="M6.4 0.5L0.3 6.2M6.4 0.5L12.7 5.7M3 6.4H10M3.3 9.4H9.6M0.4 12.7H12.5M6.4 4.6V12.7"/></g><g transform="translate(27.3,0)"><path d="M6.1 0V1.8M0.8 4.7V2.6H12.5V4.5M5.2 3.3L2.6 6.4M4.6 4.7H9.5L0.5 9.1M4.6 5.6L13 8.8M2.8 13.9V9.7H10.6V13.9M2.8 13.3H10.6"/></g></g></svg>
<svg class="ab" style="left:1431px;top:823px;overflow:visible" width="8" height="18" viewBox="0 0 8 18"><path d="M5.2 1.6Q-0.6 8.6 5.2 15.6" fill="none" stroke="#f0f0f0" stroke-width="1.2"/></svg>
<div class="t" style="left:1440.60px;top:821.15px;font-size:15px;letter-spacing:0.141px;color:#f0f0f0;">www.anquanke.com</div>
<svg class="ab" style="left:1580px;top:823px;overflow:visible" width="8" height="18" viewBox="0 0 8 18"><path d="M2 1.8Q7.6 8.6 2 15.4" fill="none" stroke="#f0f0f0" stroke-width="1.2"/></svg>
</body></html>
